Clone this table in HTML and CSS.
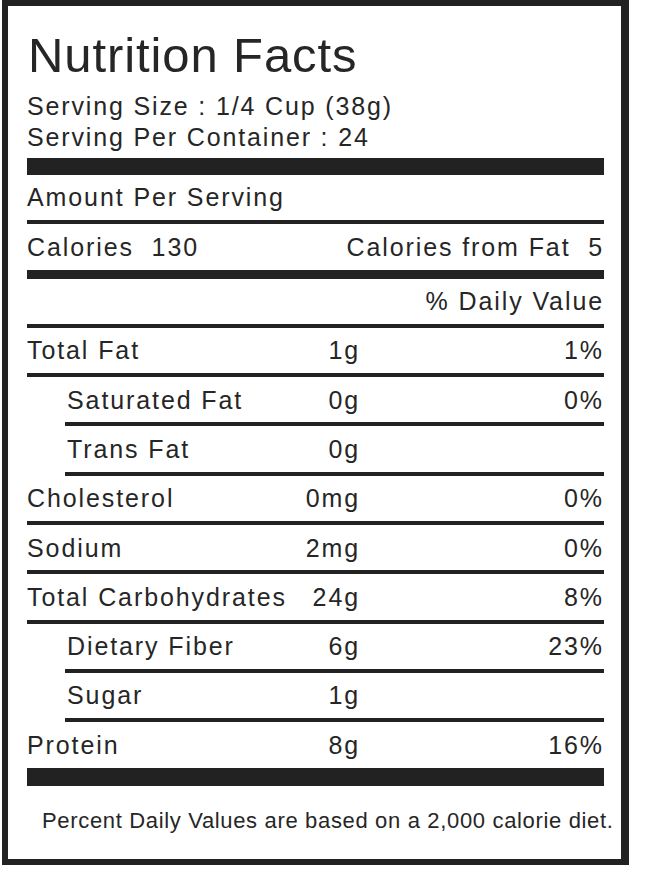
FILE: index.html
```html
<!DOCTYPE html>
<html lang="en">
<head>
<meta charset="utf-8">
<title>Nutrition Facts</title>
<link rel="stylesheet" href="styles.css">
</head>
<body>
<div class="label">
  <h1 class="title">Nutrition Facts</h1>
  <div class="serving serving-first">Serving Size : 1/4 Cup (38g)</div>
  <div class="serving">Serving Per Container : 24</div>
  <div class="bar bar-top"></div>

  <div class="row"><span>Amount Per Serving</span></div>
  <div class="row row-cal"><span>Calories&nbsp; 130</span><span>Calories from Fat&nbsp; 5</span></div>
  <div class="row row-dv"><span>% Daily Value</span></div>

  <div class="row nutrient"><span>Total Fat</span><span class="amt">1g</span><span class="pct">1%</span></div>
  <div class="row nutrient sub"><span>Saturated Fat</span><span class="amt">0g</span><span class="pct">0%</span></div>
  <div class="row nutrient sub"><span>Trans Fat</span><span class="amt">0g</span><span class="pct"></span></div>
  <div class="row nutrient"><span>Cholesterol</span><span class="amt">0mg</span><span class="pct">0%</span></div>
  <div class="row nutrient"><span>Sodium</span><span class="amt">2mg</span><span class="pct">0%</span></div>
  <div class="row nutrient"><span>Total Carbohydrates</span><span class="amt">24g</span><span class="pct">8%</span></div>
  <div class="row nutrient sub"><span>Dietary Fiber</span><span class="amt">6g</span><span class="pct">23%</span></div>
  <div class="row nutrient sub"><span>Sugar</span><span class="amt">1g</span><span class="pct"></span></div>
  <div class="row nutrient row-last"><span>Protein</span><span class="amt">8g</span><span class="pct">16%</span></div>

  <div class="bar bar-bottom"></div>
  <p class="footnote">Percent Daily Values are based on a 2,000 calorie diet.</p>
</div>
</body>
</html>
```

FILE: styles.css
```css
html, body {
  margin: 0;
  padding: 0;
  background: #ffffff;
}

body {
  padding-left: 2px;
  font-family: "Liberation Sans", Arial, sans-serif;
  color: #262626;
}

.label {
  width: 627px;
  box-sizing: border-box;
  border: 6px solid #222222;
  border-right-width: 8px;
  padding: 21px 17px 22.6px 19px;
  background: #ffffff;
}

.title {
  margin: 0;
  padding-left: 1px;
  font-size: 49px;
  font-weight: normal;
  line-height: 56px;
  letter-spacing: 0.9px;
}

.serving {
  font-size: 25px;
  line-height: 31.5px;
  letter-spacing: 1.85px;
}

.serving-first {
  margin-top: 7.6px;
}

.bar {
  background: #222222;
}

.bar-top {
  margin-top: 4.4px;
  height: 17px;
}

.bar-bottom {
  height: 18px;
}

.row {
  font-size: 25px;
  letter-spacing: 1.9px;
  line-height: 43.8px;
  padding-top: 1.5px;
  border-bottom: 4px solid #222222;
  white-space: nowrap;
}

.row-cal {
  display: flex;
  justify-content: space-between;
  border-bottom-width: 9px;
}

.row-dv {
  text-align: right;
}

.nutrient {
  display: grid;
  grid-template-columns: 1fr auto 244px;
}

.nutrient .amt {
  text-align: right;
}

.nutrient .pct {
  text-align: right;
}

.sub {
  margin-left: 38px;
  padding-left: 2px;
}

.row-last {
  border-bottom: none;
}

.footnote {
  margin: 20.8px 0 0 15px;
  font-size: 22px;
  line-height: 30px;
  letter-spacing: 0.66px;
  white-space: nowrap;
}
```
